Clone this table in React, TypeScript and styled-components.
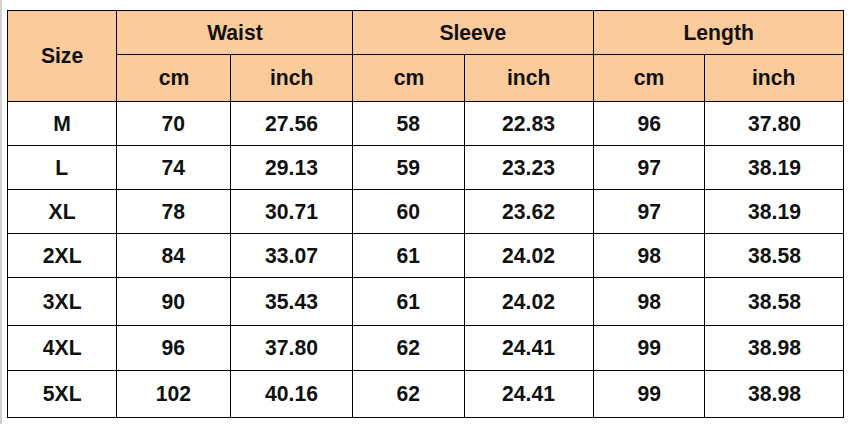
import React from 'react';
import styled, { createGlobalStyle } from 'styled-components';

const GlobalStyle = createGlobalStyle`
  html, body {
    margin: 0;
    padding: 0;
    background: #ffffff;
  }
`;

const Page = styled.div`
  width: 851px;
  height: 424px;
  box-sizing: border-box;
  border-left: 2px solid #d2d2d2;
  padding: 10px 0 0 5px;
  background: #ffffff;
  font-family: 'Liberation Sans', Arial, sans-serif;
`;

const Table = styled.table`
  border-collapse: collapse;
  table-layout: fixed;
  width: 836px;
  color: #111111;
`;

const HeadCell = styled.th`
  background: #fccb9b;
  border: 1px solid #000000;
  font-size: 22px;
  font-weight: bold;
  text-align: center;
  vertical-align: middle;
  padding: 0;
`;

const Cell = styled.td`
  background: #ffffff;
  border: 1px solid #000000;
  font-size: 22px;
  font-weight: bold;
  text-align: center;
  vertical-align: middle;
  padding: 0;
`;

// the source text is slightly narrow for its height
const Label = styled.span`
  display: inline-block;
  transform: scaleX(0.96);
`;

const Row = styled.tr<{ $h: number }>`
  height: ${(p) => p.$h}px;
`;

const colWidths = [109, 114, 122, 112, 129, 111, 139];

const rows = [
  ['M', '70', '27.56', '58', '22.83', '96', '37.80'],
  ['L', '74', '29.13', '59', '23.23', '97', '38.19'],
  ['XL', '78', '30.71', '60', '23.62', '97', '38.19'],
  ['2XL', '84', '33.07', '61', '24.02', '98', '38.58'],
  ['3XL', '90', '35.43', '61', '24.02', '98', '38.58'],
  ['4XL', '96', '37.80', '62', '24.41', '99', '38.98'],
  ['5XL', '102', '40.16', '62', '24.41', '99', '38.98'],
];

const rowHeights = [44, 44, 44, 44, 48, 45, 47];

const App: React.FC = () => {
  return (
    <>
      <GlobalStyle />
      <Page>
        <Table>
          <colgroup>
            {colWidths.map((w, i) => (
              <col key={i} style={{ width: w }} />
            ))}
          </colgroup>
          <thead>
            <Row $h={44}>
              <HeadCell rowSpan={2}><Label>Size</Label></HeadCell>
              <HeadCell colSpan={2}><Label>Waist</Label></HeadCell>
              <HeadCell colSpan={2}><Label>Sleeve</Label></HeadCell>
              <HeadCell colSpan={2}><Label>Length</Label></HeadCell>
            </Row>
            <Row $h={47}>
              {['cm', 'inch', 'cm', 'inch', 'cm', 'inch'].map((u, i) => (
                <HeadCell key={i}><Label>{u}</Label></HeadCell>
              ))}
            </Row>
          </thead>
          <tbody>
            {rows.map((r, i) => (
              <Row key={r[0]} $h={rowHeights[i]}>
                {r.map((v, j) => (
                  <Cell key={j}><Label>{v}</Label></Cell>
                ))}
              </Row>
            ))}
          </tbody>
        </Table>
      </Page>
    </>
  );
};

export default App;
